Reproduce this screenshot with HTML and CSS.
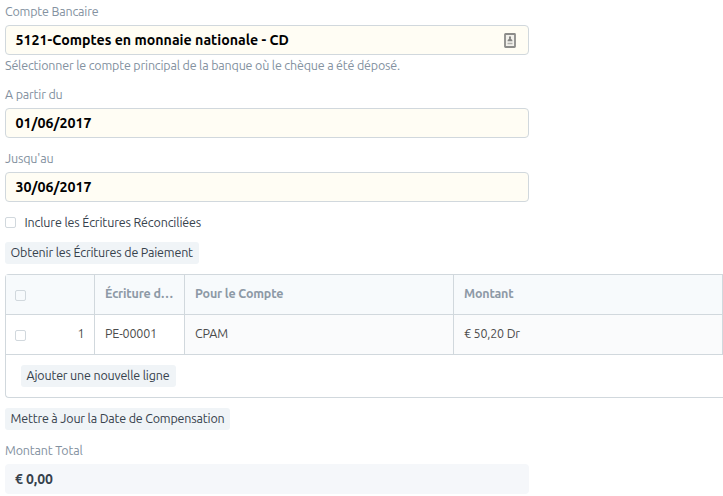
FILE: index.html
```html
<!DOCTYPE html>
<html lang="fr">
<head>
<meta charset="utf-8">
<title>Compensation bancaire</title>
<link rel="stylesheet" href="styles.css">
</head>
<body>
<main class="form">
  <section class="field">
    <label class="label">Compte Bancaire</label>
    <div class="control"><span>5121-Comptes en monnaie nationale - CD</span>
      <svg class="card-icon" width="12" height="15" viewBox="0 0 12 15"><rect x="1" y="1" width="10" height="13" rx=".5" fill="#f2f1ec" stroke="#8c8c8a" stroke-width="1.8"/><path d="M6 3.2c1.2 0 1.2 1.6.8 2.4.2.8 1.7.7 1.7 2.7h-5c0-2 1.5-1.900 1.7-2.7C4.8 4.8 4.8 3.2 6 3.2z" fill="#858583"/><path d="M3.5 10.5h5" stroke="#b0b0ad" stroke-width="1.5"/></svg>
    </div>
    <p class="help">Sélectionner le compte principal de la banque où le chèque a été déposé.</p>
  </section>
  <section class="field field-from">
    <label class="label">A partir du</label>
    <div class="control"><span>01/06/2017</span></div>
  </section>
  <section class="field field-to">
    <label class="label">Jusqu'au</label>
    <div class="control"><span>30/06/2017</span></div>
  </section>
  <div class="check-row"><i class="box"></i><span>Inclure les Écritures Réconciliées</span></div>
  <button class="btn btn-get"><span>Obtenir les Écritures de Paiement</span></button>
  <div class="grid">
    <div class="row head">
      <div class="cell index"><i class="box"></i></div>
      <div class="cell"><span>Écriture d…</span></div>
      <div class="cell"><span>Pour le Compte</span></div>
      <div class="cell"><span>Montant</span></div>
    </div>
    <div class="row">
      <div class="cell index"><i class="box"></i><span>1</span></div>
      <div class="cell"><span>PE-00001</span></div>
      <div class="cell shade"><span>CPAM</span></div>
      <div class="cell shade"><span>€ 50,20 Dr</span></div>
    </div>
    <div class="foot"><button class="btn btn-add"><span>Ajouter une nouvelle ligne</span></button></div>
  </div>
  <button class="btn btn-update"><span>Mettre à Jour la Date de Compensation</span></button>
  <section class="field field-total">
    <label class="label">Montant Total</label>
    <div class="readonly"><span>€ 0,00</span></div>
  </section>
</main>
</body>
</html>
```
FILE: styles.css
```css
* { box-sizing: border-box; }
body { margin: 0; background: #fff; color: #36414c; font: 12.5px/18px Ubuntu, "Noto Sans", sans-serif; letter-spacing: -.175px; overflow: hidden; }
.form { display: flex; flex-direction: column; align-items: flex-start; height: 496px; padding: 2px 0 0 5px; white-space: nowrap; }
.field { width: 524px; }
.label { display: block; height: 18px; margin-bottom: 5px; color: #8391a0; line-height: 19px; }
.control { display: flex; align-items: center; justify-content: space-between; height: 30px; padding: 0 12px 0 9.5px; border: 1px solid #d1d8dd; border-radius: 4px; background: #fffdf4; color: #000; font-size: 14.2px; font-weight: 700; letter-spacing: 0; }
.help { margin: 2px 0 0; height: 18px; color: #8391a0; line-height: 16px; }
.field-from { margin-top: 10px; }
.field-to { margin-top: 11px; }
.check-row { display: flex; align-items: center; gap: 9px; height: 20px; margin: 10px 0 0 -.5px; letter-spacing: -.14px; }
.box { display: block; flex: none; width: 11px; height: 11px; border: 1px solid #d1d8dd; border-radius: 2px; background: #fff; }
.btn { display: block; height: 22px; padding: 0 0 2px 5.5px; border: 0; border-radius: 3px; background: #f0f4f7; color: #36414c; font: inherit; letter-spacing: inherit; line-height: 19px; text-align: left; }
.btn-get { width: 194px; margin-top: 10px; }
.grid { width: 724px; height: 124px; margin-top: 10px; border: 1px solid #d1d8dd; border-right: 0; border-radius: 4px 0 0 4px; }
.row { display: grid; grid-template-columns: 89px 90px 269px 269px; width: 717px; height: 40px; border-bottom: 1px solid #d1d8dd; color: #4c4c4c; line-height: 17px; }
.head { background: #f7fafc; color: #8d99a6; font-weight: 700; }
.cell { display: flex; align-items: center; padding: 0 10px 2px; border-right: 1px solid #d1d8dd; }
.index { justify-content: space-between; padding-left: 9.4px; padding-right: 9.5px; }
.index .box { margin-top: 4px; }
.head .box { background: transparent; }
.shade { background: #fafbfc; }
.foot { padding: 10px 15px; }
.btn-add { width: 155px; }
.btn-update { width: 225px; margin-top: 10px; }
.field-total { margin-top: 11px; }
.readonly { display: flex; align-items: center; height: 30px; padding-left: 10px; border-radius: 4px; background: #f5f7fa; font-size: 14px; font-weight: 700; letter-spacing: -.1px; }
```
